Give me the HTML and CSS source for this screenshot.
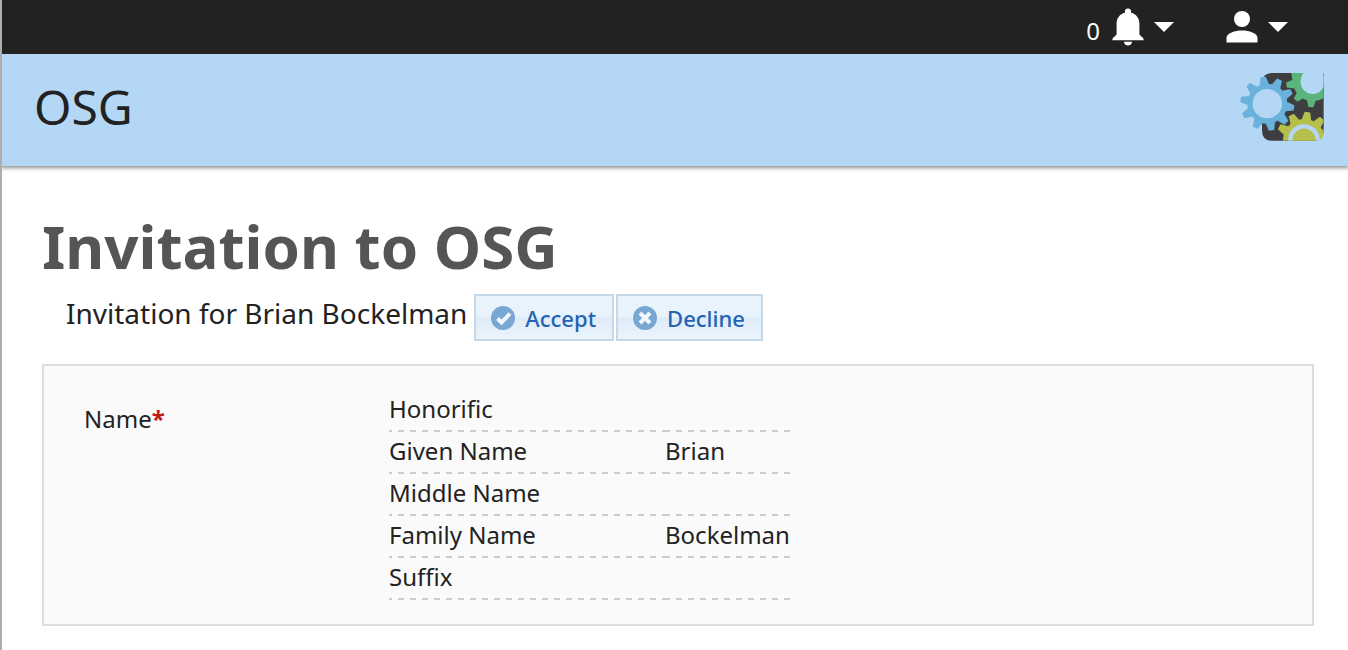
FILE: index.html
```html
<!DOCTYPE html>
<html lang="en">
<head>
<meta charset="utf-8">
<title>Invitation to OSG</title>
<link rel="stylesheet" href="styles.css">
</head>
<body>
<nav class="topbar">
  <button class="menu notifications" type="button" aria-label="Notifications">
    <span class="count">0</span>
    <svg class="bell" viewBox="0 0 32 38" aria-hidden="true"><path d="M16 0.500c-1.900 0-3.100 1.200-3.100 3v1.200C7.700 6 4.600 10.300 4.600 15.500V26.500L0.500 30.500V32.300H31.500V30.500L27.400 26.500V15.500C27.400 10.300 24.300 6 19.100 4.700V3.500c0-1.800-1.200-3-3.100-3zM12 33.800h8c0 2.300-1.800 3.700-4 3.700s-4-1.400-4-3.700z"/></svg>
    <svg class="caret" viewBox="0 0 20 10" aria-hidden="true"><path d="M0 0H20L10 10z"/></svg>
  </button>
  <button class="menu" type="button" aria-label="Account">
    <svg class="person" viewBox="0 0 32 32" aria-hidden="true"><circle cx="16" cy="8" r="8"/><path d="M0.500 31.500V27C0.500 22 9 19.500 16 19.500S31.500 22 31.500 27V31.500z"/></svg>
    <svg class="caret" viewBox="0 0 20 10" aria-hidden="true"><path d="M0 0H20L10 10z"/></svg>
  </button>
</nav>
<header class="banner">
  <span class="brand">OSG</span>
  <svg class="logo" viewBox="30 39 252 204" role="img" aria-label="Gears logo">
    <defs>
      <path id="tooth" d="M-14 -58L-8 -81H8L14 -58z"/>
      <clipPath id="tile"><path d="M96 39H281V215Q281 242 254 242H96z"/></clipPath>
    </defs>
    <path fill="#3e3e40" d="M126 39H281V212Q281 242 251 242H126Q96 242 96 212V69Q96 39 126 39z"/>
    <g clip-path="url(#tile)">
      <g fill="#5bb47c">
        <circle cx="248" cy="66" r="58"/>
        <path d="M184 39H220V80H190z"/>
        <use href="#tooth" transform="translate(248 64) rotate(-176) scale(.96)"/>
        <use href="#tooth" transform="translate(248 64) rotate(-138) scale(.94)"/>
        <use href="#tooth" transform="translate(248 64) rotate(-98) scale(.98)"/>
      </g>
      <circle cx="248" cy="66" r="36" fill="#b5d7f6"/>
      <path fill="#b5d7f6" d="M220 39H281V66H212Q212 50 220 39z"/>
      <g fill="#b5bf4c">
        <circle cx="222" cy="240" r="63"/>
        <use href="#tooth" transform="translate(222 240) rotate(-62) scale(1.040)"/>
        <use href="#tooth" transform="translate(222 240) rotate(-27) scale(1.040)"/>
        <use href="#tooth" transform="translate(222 240) rotate(7) scale(1.040)"/>
        <use href="#tooth" transform="translate(222 240) rotate(40) scale(1.040)"/>
        <use href="#tooth" transform="translate(222 240) rotate(73) scale(1.040)"/>
      </g>
      <circle cx="222" cy="240" r="41" fill="#b5bf4c" stroke="#b5d7f6" stroke-width="13"/>
    </g>
    <g fill="#68b2dc" transform="translate(112 131)">
      <use href="#tooth" transform="rotate(-9)"/>
      <use href="#tooth" transform="rotate(27)"/>
      <use href="#tooth" transform="rotate(63)"/>
      <use href="#tooth" transform="rotate(99)"/>
      <use href="#tooth" transform="rotate(135)"/>
      <use href="#tooth" transform="rotate(171)"/>
      <use href="#tooth" transform="rotate(207)"/>
      <use href="#tooth" transform="rotate(243)"/>
      <use href="#tooth" transform="rotate(279)"/>
      <use href="#tooth" transform="rotate(315)"/>
      <circle r="60"/>
      <circle r="44" fill="#b5d7f6"/>
    </g>
  </svg>
</header>
<main class="content">
  <h1 class="title">Invitation to OSG</h1>
  <div class="invite">
    <p class="invitee">Invitation for Brian Bockelman</p>
    <div class="actions">
      <button class="action" type="button">
        <svg class="action-icon" viewBox="0 0 24 24" aria-hidden="true"><circle cx="12" cy="12" r="12" fill="#78a7d4"/><path d="M6.500 12.500L10.500 16.500L19 7.500" fill="none" stroke="#f1f7fd" stroke-width="4"/></svg>
        Accept
      </button>
      <button class="action" type="button">
        <svg class="action-icon" viewBox="0 0 24 24" aria-hidden="true"><circle cx="12" cy="12" r="12" fill="#78a7d4"/><path d="M7 7L17 17M17 7L7 17" fill="none" stroke="#f1f7fd" stroke-width="4"/></svg>
        Decline
      </button>
    </div>
  </div>
  <section class="panel">
    <div class="field" id="name-label">Name<span class="required">*</span></div>
    <table class="names" aria-labelledby="name-label">
      <tbody>
        <tr><th scope="row">Honorific</th><td></td></tr>
        <tr><th scope="row">Given Name</th><td>Brian</td></tr>
        <tr><th scope="row">Middle Name</th><td></td></tr>
        <tr><th scope="row">Family Name</th><td>Bockelman</td></tr>
        <tr><th scope="row">Suffix</th><td></td></tr>
      </tbody>
    </table>
  </section>
</main>
</body>
</html>
```
FILE: styles.css
```css
* {
  box-sizing: border-box;
}

html {
  background: #fff;
}

body {
  margin: 0;
  min-height: 100vh;
  border-left: 2px solid #aeaeae;
  color: #222;
  font-family: "Noto Sans", sans-serif;
  font-size: 24px;
  line-height: 32px;
}

button {
  font: inherit;
  cursor: pointer;
}

.topbar {
  display: flex;
  justify-content: flex-end;
  gap: 52px;
  height: 54px;
  padding-right: 60px;
  background: #222;
}

.menu {
  display: flex;
  align-items: center;
  gap: 10px;
  padding: 0;
  border: 0;
  background: none;
  color: #fff;
  fill: #fff;
}

.count {
  padding: 8px 2px 0 0;
}

.bell {
  width: 32px;
  height: 38px;
}

.person {
  width: 32px;
  height: 32px;
}

.caret {
  width: 20px;
  height: 10px;
}

.banner {
  display: flex;
  align-items: center;
  justify-content: space-between;
  height: 112px;
  padding: 0 24px 6px 32px;
  background: #b5d7f6;
  box-shadow: 0 1px 4px 1px rgba(0, 0, 0, 0.45);
  clip-path: inset(0 0 -8px 0);
}

.brand {
  font-size: 48px;
  line-height: 64px;
}

.logo {
  width: 84px;
  height: 68px;
}

.content {
  padding: 40px 34px 24px 40px;
}

.title {
  margin: 0;
  color: #555;
  font-size: 60px;
  line-height: 80px;
}

.invite {
  display: flex;
  gap: 7px;
  padding: 8px 0 0 24px;
}

.invitee {
  margin: 0;
  font-size: 28px;
  line-height: 38px;
}

.actions {
  display: flex;
  gap: 2px;
}

.action {
  display: flex;
  align-items: center;
  gap: 10px;
  height: 47px;
  padding: 0 16px 0 15px;
  border: 2px solid #c5d9eb;
  background: linear-gradient(#e9f3fc 0 50%, #deebf8 50%, #ebf4fc);
  color: #2463b4;
  font-size: 22px;
  font-weight: 500;
}

.action-icon {
  width: 24px;
  height: 24px;
}

.panel {
  display: flex;
  margin-top: 23px;
  padding: 24px 40px;
  border: 2px solid #ddd;
  background: #fafafa;
}

.field {
  width: 305px;
  padding-top: 13px;
}

.required {
  color: #c11b17;
  font-weight: 700;
}

.names {
  border-spacing: 0;
}

.names th,
.names td {
  height: 42px;
  padding: 0 0 4px;
  background-position: left bottom;
  background-repeat: no-repeat;
  background-size: 100% 2px;
  font-weight: 400;
  text-align: left;
}

.names th {
  width: 276px;
  background-image: repeating-linear-gradient(90deg, #ccc 0 3px, transparent 3px 9px, #ccc 9px 12px);
}

.names td {
  background-image: repeating-linear-gradient(90deg, #ccc 0 5px, transparent 5px 11px, #ccc 11px 12px);
}
```
